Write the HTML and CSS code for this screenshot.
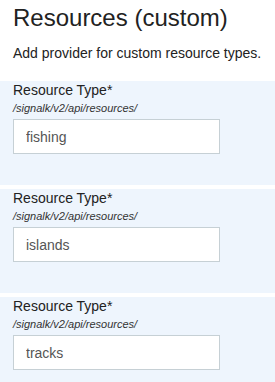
FILE: index.html
```html
<!DOCTYPE html>
<html lang="en">
<head>
    <meta charset="UTF-8">
    <meta name="viewport" content="width=device-width, initial-scale=1.0">
    <title>Resources (custom)</title>
    <link rel="stylesheet" href="styles.css">
</head>
<body>
    <div class="header">
        <h1>Resources (custom)</h1>
        <p>Add provider for custom resource types.</p>
    </div>

    <div class="resource">
        <label for="type1">Resource Type*</label>
        <div class="path">/signalk/v2/api/resources/</div>
        <input type="text" id="type1" value="fishing">
    </div>

    <div class="resource">
        <label for="type2">Resource Type*</label>
        <div class="path">/signalk/v2/api/resources/</div>
        <input type="text" id="type2" value="islands">
    </div>

    <div class="resource">
        <label for="type3">Resource Type*</label>
        <div class="path">/signalk/v2/api/resources/</div>
        <input type="text" id="type3" value="tracks">
    </div>
</body>
</html>
```

FILE: styles.css
```css
body {
    font-family: "Liberation Sans", Arial, sans-serif;
    background-color: #fff;
    color: #222;
    margin: 0;
    padding: 0;
}
.header {
    padding: 0 13px;
}
h1 {
    font-size: 24px;
    font-weight: normal;
    line-height: 28px;
    margin: 4px 0 0 0;
}
.header p {
    font-size: 14px;
    line-height: 20px;
    margin: 11px 0 18px 0;
}
.resource {
    background-color: #eef5fd;
    padding: 0 13px 31px 13px;
    margin-bottom: 4px;
}
.resource label {
    display: block;
    font-size: 14px;
    line-height: 19px;
}
.path {
    font-size: 11px;
    font-style: italic;
    line-height: 16px;
    color: #333;
}
.resource input {
    display: block;
    width: 207px;
    height: 35px;
    margin-top: 3px;
    padding: 0 12px;
    border: 1px solid #c6d0d5;
    border-radius: 0;
    box-sizing: border-box;
    font-family: "Liberation Sans", Arial, sans-serif;
    font-size: 14px;
    color: #555;
    background-color: #fff;
    outline: none;
}
```
